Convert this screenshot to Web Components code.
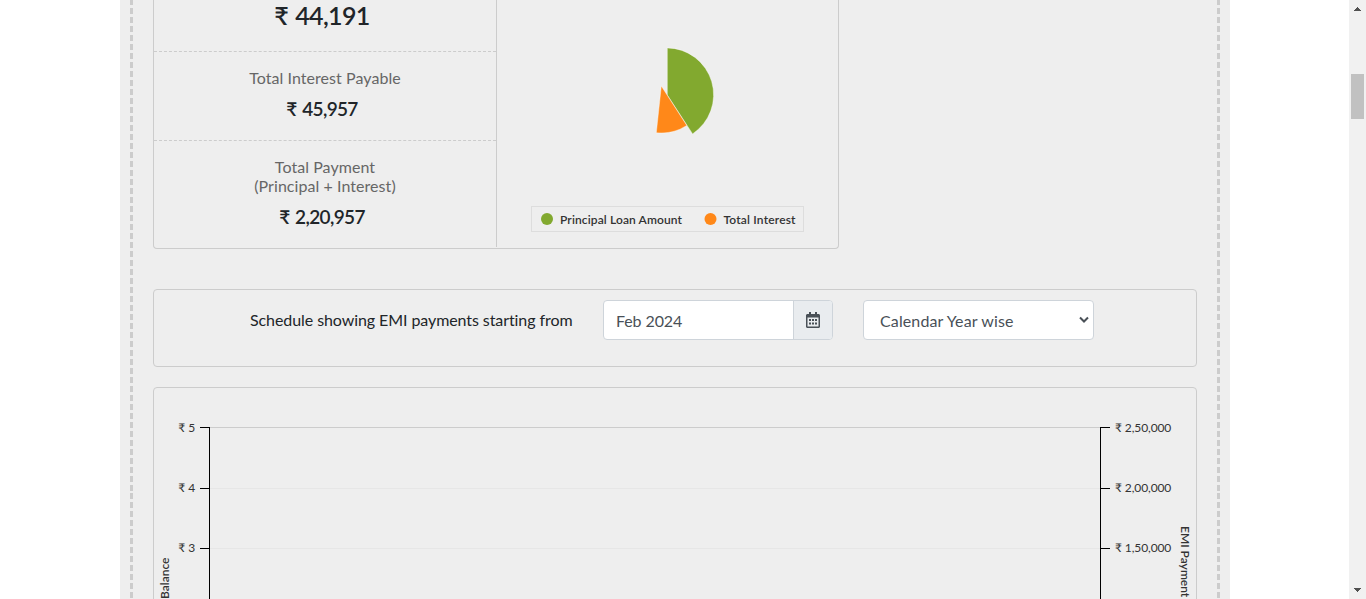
<!DOCTYPE html>
<html lang="en"><head><meta charset="utf-8"><title>EMI Calculator</title>
<style>html,body{margin:0;height:100%;overflow:hidden;background:#fff}body{font-family:Lato,"Open Sans",sans-serif;color:#212529;font-size:16px}</style></head>
<body><emi-page></emi-page>
<script>
const define=(name,html)=>{const t=document.createElement('template');t.innerHTML='<style>*{box-sizing:border-box}</style>'+html;
customElements.define(name,class extends HTMLElement{constructor(){super();this.attachShadow({mode:'open'}).appendChild(t.content.cloneNode(true))}})};

define('emi-row',`<style>:host{display:flex;flex-direction:column;align-items:center;box-sizing:border-box;height:var(--h,89px);padding-top:var(--pt,16px);border-bottom:1px dashed #ccc}
:host([last]){border-bottom:0}
.l{color:#666;line-height:19px;text-align:center;height:var(--lh,19px);letter-spacing:.06px}
.v{font-weight:600;font-size:var(--fs,19px);line-height:24px;margin-top:var(--mt,10px);padding-right:6px;white-space:nowrap;letter-spacing:-.65px;word-spacing:1.5px}</style>
<div class="l"><slot name="label"></slot></div><div class="v"><slot></slot></div>`);

define('emi-pie',`<style>:host{display:block}svg{display:block}text{font-size:12px;font-weight:600;fill:#333}</style>
<svg width="341" height="247" viewBox="497 0 341 247">
<path d="M667.300 95V47.900A46.900 46.900 0 0 1 692.600 133.900Z" fill="#82a92f" stroke="#fff" stroke-width=".4"/>
<path d="M661.300 86L686.800 125.500A46.700 46.700 0 0 1 656.300 132.800Z" fill="#ff8819" stroke="#fff" stroke-width=".4"/>
<rect x="531.5" y="206.5" width="272" height="25" fill="none" stroke="#ddd"/>
<circle cx="547" cy="219" r="6" fill="#82a92f"/><text x="560" y="224" textLength="122">Principal Loan Amount</text>
<circle cx="710.5" cy="219" r="6" fill="#ff8819"/><text x="723.5" y="224" textLength="72">Total Interest</text></svg>`);

define('emi-summary',`<style>:host{display:flex;box-sizing:border-box;width:686px;height:249px;border:1px solid #ccc;border-top:0;border-radius:0 0 4px 4px}
.c{width:343px;height:247px;border-right:1px solid #ccc}</style>
<div class="c"><emi-row style="--h:52px;--pt:0px;--lh:0px;--fs:25px;--mt:3px"><span slot="label"></span>₹ 44,191</emi-row>
<emi-row><span slot="label">Total Interest Payable</span>₹ 45,957</emi-row>
<emi-row last style="--h:106px;--lh:38px"><span slot="label">Total Payment<br>(Principal + Interest)</span>₹ 2,20,957</emi-row></div><emi-pie></emi-pie>`);

define('month-field',`<style>:host{display:flex;box-sizing:border-box;width:230px;height:40px;border:1px solid #ced4da;border-radius:4px;background:#fff;color:#495057;overflow:hidden}
.v{flex:1;padding:1px 12px 0;line-height:38px;letter-spacing:-.1px}.a{width:39px;background:#e9ecef;border-left:1px solid #ced4da;display:flex;align-items:center;justify-content:center}svg{display:block}</style>
<div class="v"><slot></slot></div><div class="a"><svg width="14" height="16" viewBox="0 0 448 512" fill="#495057"><path fill-rule="evenodd" d="M400 64h-48V12c0-6.600-5.400-12-12-12h-40c-6.600 0-12 5.400-12 12v52H160V12c0-6.600-5.400-12-12-12h-40c-6.600 0-12 5.400-12 12v52H48C21.500 64 0 85.500 0 112v352c0 26.500 21.500 48 48 48h352c26.500 0 48-21.500 48-48V112c0-26.500-21.500-48-48-48zm-6 400H54c-3.300 0-6-2.700-6-6V176h352v282c0 3.300-2.700 6-6 6z"/><path d="M96 224h64v64H96zM192 224h64v64h-64zM288 224h64v64h-64zM96 336h64v64H96zM192 336h64v64h-64zM288 336h64v64h-64z"/></svg></div>`);

define('year-select',`<style>:host{display:flex;box-sizing:border-box;width:231px;height:40px;border:1px solid #ced4da;border-radius:4px;background:#fff;color:#495057;align-items:center;justify-content:space-between;padding:1px 4px 0 16px;letter-spacing:.12px}svg{margin-top:-1px}</style>
<span><slot></slot></span><svg width="10" height="8" viewBox="0 0 10 8" fill="none" stroke="#495057" stroke-width="2"><path d="M1 1.500L5 5.500L9 1.500"/></svg>`);

define('schedule-bar',`<style>:host{display:flex;box-sizing:border-box;width:1044px;height:78px;border:1px solid #ccc;border-radius:4px;margin-top:40px;padding:10px 0 0 96px;align-items:flex-start}
.t{width:323px;line-height:40px;margin-right:30px;white-space:nowrap;letter-spacing:-.08px}year-select{margin-left:30px}</style>
<div class="t">Schedule showing EMI payments starting from</div><month-field>Feb 2024</month-field><year-select>Calendar Year wise</year-select>`);

define('payment-chart',`<style>:host{display:block;box-sizing:border-box;width:1044px;height:420px;border:1px solid #ccc;border-radius:4px;margin-top:20px}svg{display:block}text{font-size:12px;fill:#333;letter-spacing:-.1px}.b{font-weight:600;letter-spacing:0}</style>
<svg width="1042" height="418" viewBox="154 388 1042 418" shape-rendering="crispEdges">
<path d="M210 427.500H1100" stroke="#ccc"/><path d="M210 488.500H1100M210 548.500H1100" stroke="#e6e6e6"/>
<path d="M200 427.500H209.500V806M200 488.500H209M200 548.500H209M1110 427.500H1100.500V806M1101 488.500H1110M1101 548.500H1110" stroke="#000" fill="none"/>
<g text-anchor="end"><text x="195" y="432">₹ 5</text><text x="195" y="492">₹ 4</text><text x="195" y="552">₹ 3</text></g>
<text x="1115" y="432">₹ 2,50,000</text><text x="1115" y="492">₹ 2,00,000</text><text x="1115" y="552">₹ 1,50,000</text>
<text class="b" transform="translate(169 599) rotate(-90)">Balance</text>
<text class="b" transform="translate(1181 526) rotate(90)">EMI Payment</text></svg>`);

define('page-scrollbar',`<style>:host{display:flex;flex-direction:column;justify-content:space-between;width:17px;height:599px;background:#f1f1f1}svg{display:block}</style>
<svg width="17" height="599" shape-rendering="crispEdges"><rect x="2" y="74" width="13" height="45" fill="#c1c1c1"/><path d="M5 11V10H6V9H7V8H8V7H9V8H10V9H11V10H12V11ZM5 588H12V589H11V590H10V591H9V592H8V591H7V590H6V589H5Z" fill="#505050"/></svg>`);

define('emi-page',`<style>:host{display:flex;height:599px;overflow:hidden;justify-content:space-between}
.p{width:1110px;height:599px;margin-left:120px;padding:0 10px;background:#eee;overflow:hidden}
.d{height:599px;padding:0 23px;--g:repeating-linear-gradient(#ccc 0 6px,transparent 6px 8.985px);background:var(--g) 0 -.7px/3px 620px no-repeat,var(--g) 100% -.7px/3px 620px no-repeat}</style>
<div class="p"><div class="d"><emi-summary></emi-summary><schedule-bar></schedule-bar><payment-chart></payment-chart></div></div><page-scrollbar></page-scrollbar>`);
</script></body></html>
